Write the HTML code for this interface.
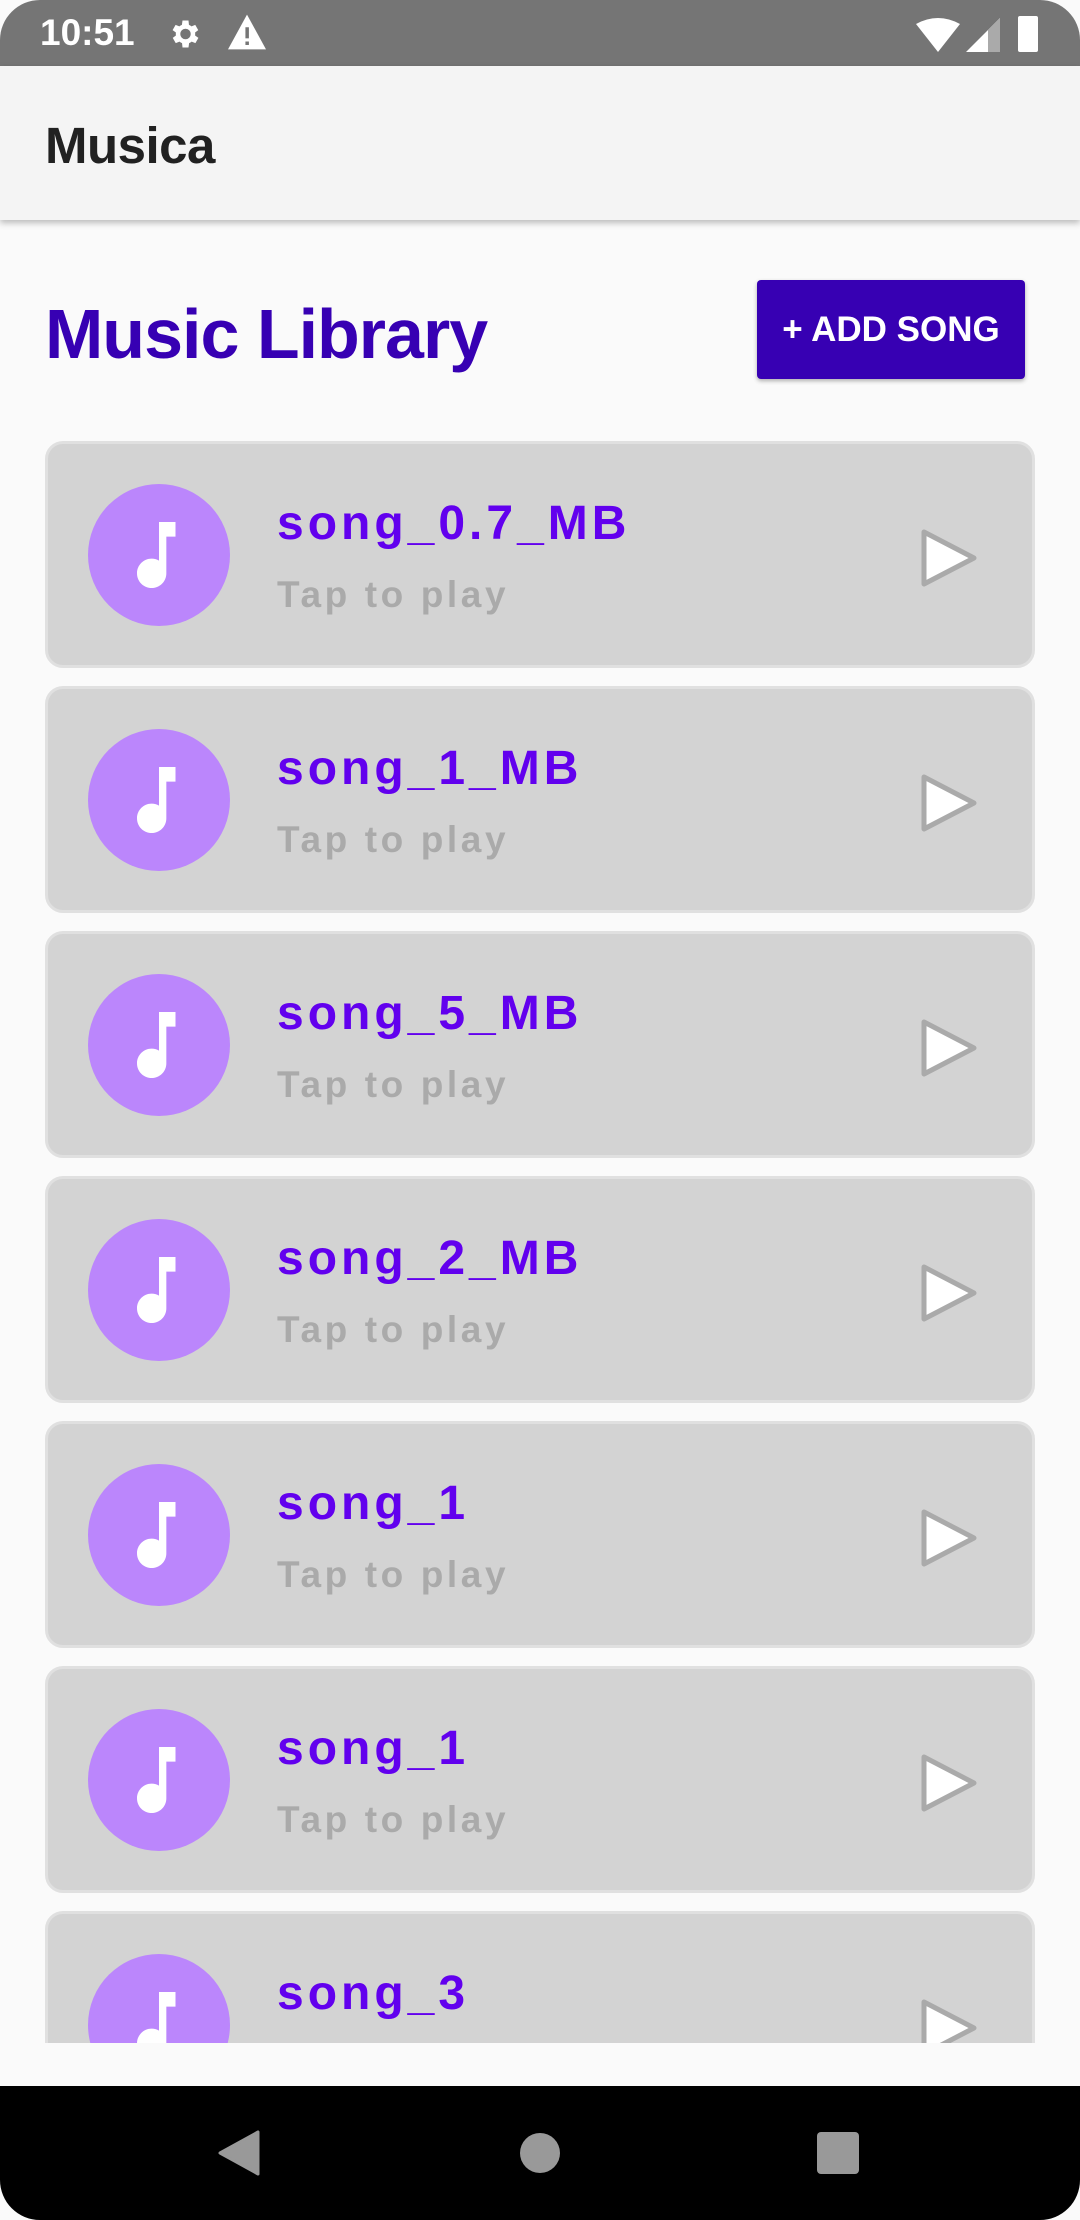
<!DOCTYPE html>
<html><head><meta charset="utf-8"><style>
*{margin:0;padding:0;box-sizing:border-box}
body{width:1080px;height:2220px;overflow:hidden;background:#fafafa;font-family:"Liberation Sans",Roboto,sans-serif;position:relative}
.status{position:absolute;left:0;top:0;width:1080px;height:66px;background:#757575;border-radius:40px 40px 0 0;color:#fff}
.appbar{position:absolute;top:66px;left:0;width:1080px;height:154px;background:#f4f4f4;box-shadow:0 3px 6px rgba(0,0,0,.25)}
.appbar span{position:absolute;left:45px;top:50px;font-size:51px;font-weight:bold;color:#212121;letter-spacing:-0.5px}
.h1{position:absolute;left:45px;top:294px;font-size:70px;font-weight:bold;color:#3700b3;letter-spacing:-1px}
.btn{position:absolute;left:757px;top:280px;width:268px;height:99px;background:#3700b3;border-radius:4px;color:#fff;font-size:35px;font-weight:bold;text-align:center;line-height:99px;box-shadow:0 2px 4px rgba(0,0,0,.3)}
.list{position:absolute;left:0;top:0;width:1080px;height:2043px;overflow:hidden}
.card{position:absolute;left:45px;width:990px;height:227px;background:#d3d3d3;border:3px solid #e0e0e0;border-radius:18px}
.circ{position:absolute;left:40px;top:40px;width:142px;height:142px;border-radius:50%;background:#bb86fc}
.circ svg{position:absolute;left:27px;top:27px}
.t{position:absolute;left:229px;top:52px;font-size:48px;font-weight:bold;color:#6200ee;letter-spacing:4px}
.s{position:absolute;left:229px;top:130px;font-size:37px;font-weight:bold;color:#aaa;letter-spacing:3.6px}
.play{position:absolute;left:872px;top:84px}
.nav{position:absolute;left:0;top:2086px;width:1080px;height:134px;background:#000;border-radius:0 0 40px 40px}
</style></head><body>
<div class="status">
<span style="position:absolute;left:40px;top:12px;font-size:37px;font-weight:bold">10:51</span>
<svg style="position:absolute;left:166px;top:16px" width="36" height="36" viewBox="0 0 24 24"><path fill="#fff" d="M19.4 13a7.5 7.5 0 000-2l2.1-1.6-2-3.5-2.5 1a7 7 0 00-1.7-1L15 3h-4l-.4 2.9a7 7 0 00-1.7 1l-2.5-1-2 3.5L6.6 11a7.5 7.5 0 000 2l-2.1 1.6 2 3.5 2.5-1a7 7 0 001.7 1L11 21h4l.4-2.9a7 7 0 001.7-1l2.5 1 2-3.5zM13 15.5a3.5 3.5 0 110-7 3.5 3.5 0 010 7z"/></svg>
<svg style="position:absolute;left:228px;top:14px" width="38" height="36" viewBox="0 0 24 22"><path fill="#fff" d="M12 0L0 22h24z"/><rect x="11" y="8" width="2.2" height="7" fill="#757575"/><rect x="11" y="17" width="2.2" height="2.2" fill="#757575"/></svg>
<svg style="position:absolute;left:916px;top:18px" width="44" height="34" viewBox="0 0 44 34"><path fill="#fff" d="M0 6Q22-6 44 6L22 34z"/></svg>
<svg style="position:absolute;left:966px;top:18px" width="34" height="34" viewBox="0 0 34 34"><path fill="#fff" d="M34 0V34H0z"/><path fill="#aaa" d="M34 0V34H22V12z"/></svg>
<div style="position:absolute;left:1018px;top:16px;width:20px;height:36px;background:#fff;border-radius:2px"></div>
</div>
<div class="list">
<div class="card" style="top:441px"><div class="circ"><svg width="88" height="88" viewBox="0 0 24 24"><path fill="#fff" d="M12 3v10.55c-.59-.34-1.27-.55-2-.55-2.21 0-4 1.79-4 4s1.79 4 4 4 4-1.79 4-4V7h2.5V3z"/></svg></div><div class="t">song_0.7_MB</div><div class="s">Tap to play</div><svg class="play" width="58" height="60" viewBox="0 0 58 60"><path d="M4 4L54 30L4 56z" fill="#fff" stroke="#aaa" stroke-width="5" stroke-linejoin="round"/></svg></div>
<div class="card" style="top:686px"><div class="circ"><svg width="88" height="88" viewBox="0 0 24 24"><path fill="#fff" d="M12 3v10.55c-.59-.34-1.27-.55-2-.55-2.21 0-4 1.79-4 4s1.79 4 4 4 4-1.79 4-4V7h2.5V3z"/></svg></div><div class="t">song_1_MB</div><div class="s">Tap to play</div><svg class="play" width="58" height="60" viewBox="0 0 58 60"><path d="M4 4L54 30L4 56z" fill="#fff" stroke="#aaa" stroke-width="5" stroke-linejoin="round"/></svg></div>
<div class="card" style="top:931px"><div class="circ"><svg width="88" height="88" viewBox="0 0 24 24"><path fill="#fff" d="M12 3v10.55c-.59-.34-1.27-.55-2-.55-2.21 0-4 1.79-4 4s1.79 4 4 4 4-1.79 4-4V7h2.5V3z"/></svg></div><div class="t">song_5_MB</div><div class="s">Tap to play</div><svg class="play" width="58" height="60" viewBox="0 0 58 60"><path d="M4 4L54 30L4 56z" fill="#fff" stroke="#aaa" stroke-width="5" stroke-linejoin="round"/></svg></div>
<div class="card" style="top:1176px"><div class="circ"><svg width="88" height="88" viewBox="0 0 24 24"><path fill="#fff" d="M12 3v10.55c-.59-.34-1.27-.55-2-.55-2.21 0-4 1.79-4 4s1.79 4 4 4 4-1.79 4-4V7h2.5V3z"/></svg></div><div class="t">song_2_MB</div><div class="s">Tap to play</div><svg class="play" width="58" height="60" viewBox="0 0 58 60"><path d="M4 4L54 30L4 56z" fill="#fff" stroke="#aaa" stroke-width="5" stroke-linejoin="round"/></svg></div>
<div class="card" style="top:1421px"><div class="circ"><svg width="88" height="88" viewBox="0 0 24 24"><path fill="#fff" d="M12 3v10.55c-.59-.34-1.27-.55-2-.55-2.21 0-4 1.79-4 4s1.79 4 4 4 4-1.79 4-4V7h2.5V3z"/></svg></div><div class="t">song_1</div><div class="s">Tap to play</div><svg class="play" width="58" height="60" viewBox="0 0 58 60"><path d="M4 4L54 30L4 56z" fill="#fff" stroke="#aaa" stroke-width="5" stroke-linejoin="round"/></svg></div>
<div class="card" style="top:1666px"><div class="circ"><svg width="88" height="88" viewBox="0 0 24 24"><path fill="#fff" d="M12 3v10.55c-.59-.34-1.27-.55-2-.55-2.21 0-4 1.79-4 4s1.79 4 4 4 4-1.79 4-4V7h2.5V3z"/></svg></div><div class="t">song_1</div><div class="s">Tap to play</div><svg class="play" width="58" height="60" viewBox="0 0 58 60"><path d="M4 4L54 30L4 56z" fill="#fff" stroke="#aaa" stroke-width="5" stroke-linejoin="round"/></svg></div>
<div class="card" style="top:1911px"><div class="circ"><svg width="88" height="88" viewBox="0 0 24 24"><path fill="#fff" d="M12 3v10.55c-.59-.34-1.27-.55-2-.55-2.21 0-4 1.79-4 4s1.79 4 4 4 4-1.79 4-4V7h2.5V3z"/></svg></div><div class="t">song_3</div><div class="s">Tap to play</div><svg class="play" width="58" height="60" viewBox="0 0 58 60"><path d="M4 4L54 30L4 56z" fill="#fff" stroke="#aaa" stroke-width="5" stroke-linejoin="round"/></svg></div>
</div>
<div class="appbar"><span>Musica</span></div>
<div class="h1">Music Library</div>
<div class="btn">+ ADD SONG</div>
<div class="nav">
<svg style="position:absolute;left:218px;top:44px" width="42" height="46" viewBox="0 0 42 46"><path d="M40 2V44L2 23z" fill="#999" stroke="#999" stroke-width="3" stroke-linejoin="round"/></svg>
<div style="position:absolute;left:520px;top:47px;width:40px;height:40px;border-radius:50%;background:#999"></div>
<div style="position:absolute;left:817px;top:46px;width:42px;height:42px;border-radius:4px;background:#999"></div>
</div>
</body></html>
